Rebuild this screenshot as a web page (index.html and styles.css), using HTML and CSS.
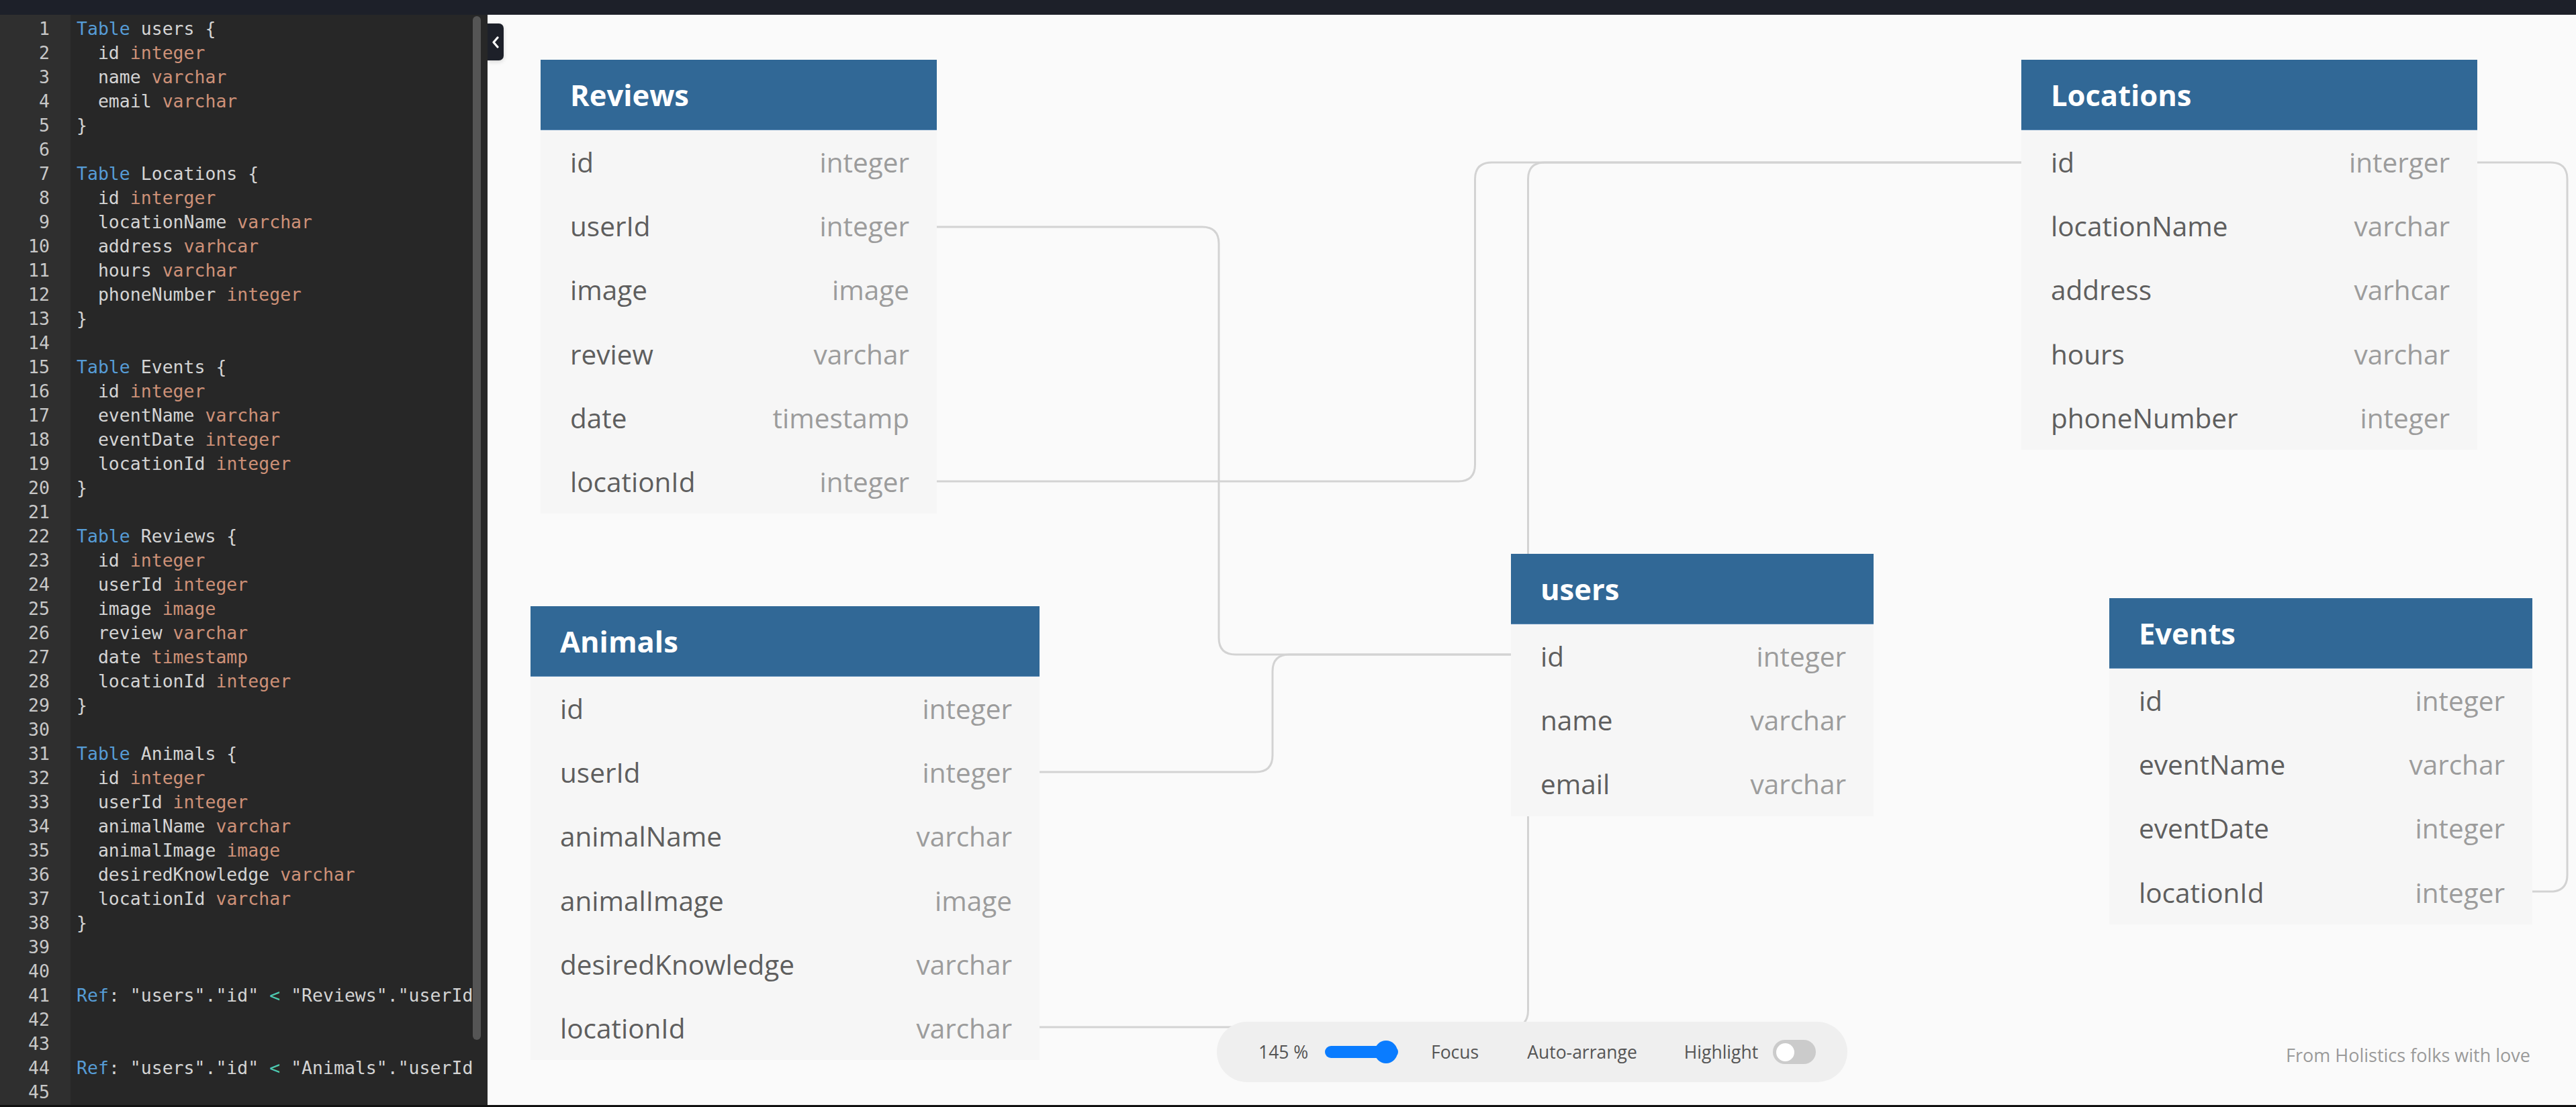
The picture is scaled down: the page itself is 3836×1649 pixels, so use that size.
FILE: index.html
```html
<!DOCTYPE html>
<html lang="en">
<head>
    <meta charset="UTF-8">
    <title>dbdiagram</title>
    <link rel="stylesheet" href="styles.css">
</head>
<body>
<div class="app">
    <div class="topbar"></div>
    <div class="main">
        <div class="editor">
            <div class="gutter">
                <div>1</div><div>2</div><div>3</div><div>4</div><div>5</div><div>6</div><div>7</div><div>8</div><div>9</div><div>10</div>
                <div>11</div><div>12</div><div>13</div><div>14</div><div>15</div><div>16</div><div>17</div><div>18</div><div>19</div><div>20</div>
                <div>21</div><div>22</div><div>23</div><div>24</div><div>25</div><div>26</div><div>27</div><div>28</div><div>29</div><div>30</div>
                <div>31</div><div>32</div><div>33</div><div>34</div><div>35</div><div>36</div><div>37</div><div>38</div><div>39</div><div>40</div>
                <div>41</div><div>42</div><div>43</div><div>44</div><div>45</div>
            </div>
            <div class="code">
                <div class="line"><span class="kw">Table</span> users {</div>
                <div class="line">  id <span class="ty">integer</span></div>
                <div class="line">  name <span class="ty">varchar</span></div>
                <div class="line">  email <span class="ty">varchar</span></div>
                <div class="line">}</div>
                <div class="line"> </div>
                <div class="line"><span class="kw">Table</span> Locations {</div>
                <div class="line">  id <span class="ty">interger</span></div>
                <div class="line">  locationName <span class="ty">varchar</span></div>
                <div class="line">  address <span class="ty">varhcar</span></div>
                <div class="line">  hours <span class="ty">varchar</span></div>
                <div class="line">  phoneNumber <span class="ty">integer</span></div>
                <div class="line">}</div>
                <div class="line"> </div>
                <div class="line"><span class="kw">Table</span> Events {</div>
                <div class="line">  id <span class="ty">integer</span></div>
                <div class="line">  eventName <span class="ty">varchar</span></div>
                <div class="line">  eventDate <span class="ty">integer</span></div>
                <div class="line">  locationId <span class="ty">integer</span></div>
                <div class="line">}</div>
                <div class="line"> </div>
                <div class="line"><span class="kw">Table</span> Reviews {</div>
                <div class="line">  id <span class="ty">integer</span></div>
                <div class="line">  userId <span class="ty">integer</span></div>
                <div class="line">  image <span class="ty">image</span></div>
                <div class="line">  review <span class="ty">varchar</span></div>
                <div class="line">  date <span class="ty">timestamp</span></div>
                <div class="line">  locationId <span class="ty">integer</span></div>
                <div class="line">}</div>
                <div class="line"> </div>
                <div class="line"><span class="kw">Table</span> Animals {</div>
                <div class="line">  id <span class="ty">integer</span></div>
                <div class="line">  userId <span class="ty">integer</span></div>
                <div class="line">  animalName <span class="ty">varchar</span></div>
                <div class="line">  animalImage <span class="ty">image</span></div>
                <div class="line">  desiredKnowledge <span class="ty">varchar</span></div>
                <div class="line">  locationId <span class="ty">varchar</span></div>
                <div class="line">}</div>
                <div class="line"> </div>
                <div class="line"> </div>
                <div class="line"><span class="kw">Ref</span>: "users"."id" <span class="op">&lt;</span> "Reviews"."userId"</div>
                <div class="line"> </div>
                <div class="line"> </div>
                <div class="line"><span class="kw">Ref</span>: "users"."id" <span class="op">&lt;</span> "Animals"."userId"</div>
                <div class="line"> </div>
            </div>
            <div class="scrollbar"><div class="thumb"></div></div>
        </div>

        <div class="canvas">
            <button class="collapse">
                <svg width="12" height="18" viewBox="0 0 12 18"><polyline points="9,2 3,9 9,16" fill="none" stroke="#fff" stroke-width="3.2" stroke-linecap="round" stroke-linejoin="round"/></svg>
            </button>

            <svg class="links" width="3110" height="1624">
                <path d="M669 316 H1064 Q1089 316 1089 341 V928 Q1089 953 1114 953 H1524"/>
                <path d="M822 1128 H1144 Q1169 1128 1169 1103 V978 Q1169 953 1194 953 H1524"/>
                <path d="M669 695 H1445.5 Q1470.5 695 1470.5 670 V245 Q1470.5 220 1495.5 220 H2284"/>
                <path d="M822 1508 H1524.5 Q1549.5 1508 1549.5 1483 V245 Q1549.5 220 1574.5 220 H2284"/>
                <path d="M2963 220 H3072 Q3097 220 3097 245 V1281 Q3097 1306 3072 1306 H3045"/>
            </svg>

            <div class="table t-reviews">
                <div class="table-head">Reviews</div>
                <div class="row"><span class="name">id</span><span class="type">integer</span></div>
                <div class="row"><span class="name">userId</span><span class="type">integer</span></div>
                <div class="row"><span class="name">image</span><span class="type">image</span></div>
                <div class="row"><span class="name">review</span><span class="type">varchar</span></div>
                <div class="row"><span class="name">date</span><span class="type">timestamp</span></div>
                <div class="row"><span class="name">locationId</span><span class="type">integer</span></div>
            </div>

            <div class="table t-locations">
                <div class="table-head">Locations</div>
                <div class="row"><span class="name">id</span><span class="type">interger</span></div>
                <div class="row"><span class="name">locationName</span><span class="type">varchar</span></div>
                <div class="row"><span class="name">address</span><span class="type">varhcar</span></div>
                <div class="row"><span class="name">hours</span><span class="type">varchar</span></div>
                <div class="row"><span class="name">phoneNumber</span><span class="type">integer</span></div>
            </div>

            <div class="table t-animals">
                <div class="table-head">Animals</div>
                <div class="row"><span class="name">id</span><span class="type">integer</span></div>
                <div class="row"><span class="name">userId</span><span class="type">integer</span></div>
                <div class="row"><span class="name">animalName</span><span class="type">varchar</span></div>
                <div class="row"><span class="name">animalImage</span><span class="type">image</span></div>
                <div class="row"><span class="name">desiredKnowledge</span><span class="type">varchar</span></div>
                <div class="row"><span class="name">locationId</span><span class="type">varchar</span></div>
            </div>

            <div class="table t-users">
                <div class="table-head">users</div>
                <div class="row"><span class="name">id</span><span class="type">integer</span></div>
                <div class="row"><span class="name">name</span><span class="type">varchar</span></div>
                <div class="row"><span class="name">email</span><span class="type">varchar</span></div>
            </div>

            <div class="table t-events">
                <div class="table-head">Events</div>
                <div class="row"><span class="name">id</span><span class="type">integer</span></div>
                <div class="row"><span class="name">eventName</span><span class="type">varchar</span></div>
                <div class="row"><span class="name">eventDate</span><span class="type">integer</span></div>
                <div class="row"><span class="name">locationId</span><span class="type">integer</span></div>
            </div>

            <div class="toolbar">
                <span class="zoom-value">145 %</span>
                <div class="slider"><div class="slider-thumb"></div></div>
                <span class="tool tool-focus">Focus</span>
                <span class="tool tool-arrange">Auto-arrange</span>
                <span class="tool tool-highlight">Highlight</span>
                <div class="switch"><div class="knob"></div></div>
            </div>

            <div class="credit">From Holistics folks with love</div>
        </div>
    </div>
</div>
</body>
</html>
```

FILE: styles.css
```css
body {
    margin: 0;
    background: #111;
    overflow: hidden;
}
.app {
    width: 3836px;
    height: 1646px;
    display: flex;
    flex-direction: column;
}
.topbar {
    height: 22px;
    background: #1d2029;
    flex-shrink: 0;
}
.main {
    flex: 1;
    display: flex;
    min-height: 0;
}

/* editor */
.editor {
    width: 726px;
    display: flex;
    background: #272727;
    font-family: "DejaVu Sans Mono", "Liberation Mono", monospace;
    font-size: 26.5px;
    line-height: 36px;
    flex-shrink: 0;
}
.gutter {
    width: 105px;
    box-sizing: border-box;
    padding: 3px 31px 0 0;
    background: #2f2f2f;
    color: #c8c8c8;
    text-align: right;
}
.code {
    flex: 1;
    min-width: 0;
    padding: 3px 0 0 9px;
    color: #d4d4d4;
    overflow: hidden;
}
.code .line {
    height: 36px;
    white-space: pre;
}
.kw {
    color: #569cd6;
}
.ty {
    color: #ce9178;
}
.op {
    color: #4ec9b0;
}
.scrollbar {
    width: 22px;
    padding-top: 2px;
}
.scrollbar .thumb {
    width: 12px;
    height: 1525px;
    background: #555;
    border-radius: 6px;
}

/* canvas */
.canvas {
    flex: 1;
    position: relative;
    background: #fafafa;
    overflow: hidden;
    font-family: "Open Sans", sans-serif;
}
.collapse {
    position: absolute;
    left: 0;
    top: 13px;
    width: 24px;
    height: 55px;
    padding: 0;
    border: none;
    border-radius: 0 7px 7px 0;
    background: #1d2029;
    display: flex;
    align-items: center;
    justify-content: center;
    box-shadow: 0 2px 6px rgba(0, 0, 0, 0.15);
}
.links {
    position: absolute;
    left: 0;
    top: 0;
}
.links path {
    fill: none;
    stroke: #d3d3d3;
    stroke-width: 3;
}

.table {
    position: absolute;
    background: #f6f6f6;
}
.t-reviews {
    left: 79px;
    top: 67px;
    width: 590px;
}
.t-locations {
    left: 2284px;
    top: 67px;
    width: 679px;
}
.t-animals {
    left: 64px;
    top: 881px;
    width: 758px;
}
.t-users {
    left: 1524px;
    top: 803px;
    width: 540px;
}
.t-events {
    left: 2415px;
    top: 869px;
    width: 630px;
}
.table-head {
    height: 105px;
    box-sizing: border-box;
    padding-left: 44px;
    display: flex;
    align-items: center;
    background: #316896;
    border-bottom: 1px solid #5c8bb6;
    color: #fff;
    font-weight: 700;
    font-size: 43.5px;
}
.row {
    height: 95.2px;
    padding: 0 41px 0 44px;
    display: flex;
    align-items: center;
    justify-content: space-between;
    font-size: 40.5px;
}
.name {
    color: #5e5e5e;
}
.type {
    color: #9c9c9c;
}

/* bottom toolbar */
.toolbar {
    position: absolute;
    left: 1086px;
    top: 1500px;
    width: 939px;
    height: 90px;
    box-sizing: border-box;
    padding-left: 62px;
    display: flex;
    align-items: center;
    background: #efefef;
    border-radius: 45px;
    font-size: 26.5px;
    color: #555;
}
.zoom-value {
    width: 74px;
    white-space: nowrap;
}
.slider {
    margin-left: 25px;
    width: 109px;
    height: 18px;
    border-radius: 9px;
    background: #0a7cff;
    position: relative;
}
.slider-thumb {
    position: absolute;
    right: 1px;
    top: -8px;
    width: 34px;
    height: 34px;
    border-radius: 50%;
    background: #0a7cff;
}
.tool-focus {
    margin-left: 49px;
}
.tool-arrange {
    margin-left: 72px;
}
.tool-highlight {
    margin-left: 70px;
}
.switch {
    margin-left: 22px;
    width: 64px;
    height: 36px;
    border-radius: 18px;
    background: #cbcbcb;
    display: flex;
    align-items: center;
    padding-left: 5px;
    box-sizing: border-box;
}
.knob {
    width: 27px;
    height: 27px;
    border-radius: 50%;
    background: #fff;
}

.credit {
    position: absolute;
    right: 68px;
    top: 1532px;
    line-height: 36px;
    font-size: 27px;
    color: #9a9a9a;
}
```
